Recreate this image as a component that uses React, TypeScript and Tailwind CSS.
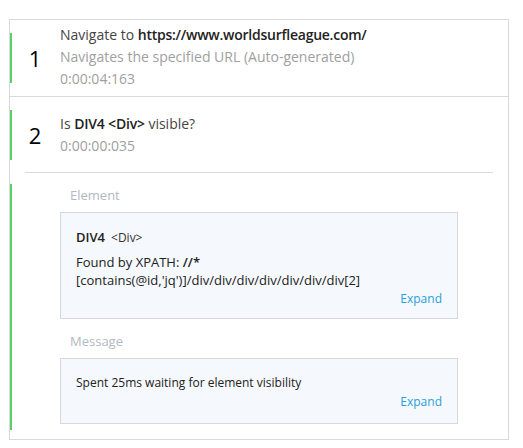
import React from "react";

const font = { fontFamily: '"Open Sans", "Noto Sans", sans-serif' };

export default function App() {
  return (
    <div className="w-[523px] h-[448px] bg-white pt-[19px] pl-[9px]" style={font}>
      <div className="w-[500px] border border-[#d9d9d9]">
        {/* Step 1 */}
        <div className="flex border-b border-[#d9d9d9]">
          <div className="w-[2px] my-[13px] bg-[#56d364]" />
          <div className="w-[48px] flex items-center justify-center text-[22px] text-black leading-none pr-[2px]">1</div>
          <div className="pt-[4px] pb-[6px] text-[14px] leading-[22px]">
            <div className="text-[#444]">
              Navigate to <span className="font-semibold text-[#222] tracking-[-0.25px]">https://www.worldsurfleague.com/</span>
            </div>
            <div className="text-[#a0a0a0]">Navigates the specified URL (Auto-generated)</div>
            <div className="text-[#a0a0a0]">0:00:04:163</div>
          </div>
        </div>
        {/* Step 2 */}
        <div className="flex items-center pt-[13px] pb-[12px]">
          <div className="w-[2px] h-[50px] bg-[#56d364]" />
          <div className="w-[48px] flex items-center justify-center text-[22px] text-black leading-none pr-[2px]">2</div>
          <div className="text-[14px] leading-[22px]">
            <div className="text-[#444]">
              Is <span className="font-semibold text-[#222] tracking-[-0.2px]">DIV4 &lt;Div&gt;</span> visible?
            </div>
            <div className="text-[#a0a0a0]">0:00:00:035</div>
          </div>
        </div>
        <div className="mx-[15px] border-t border-[#d9d9d9]" />
        <div className="flex">
          <div className="w-[2px] mt-[11px] mb-[9px] bg-[#56d364]" />
          <div className="pl-[48px] pt-[12px] pb-[15px] flex flex-col">
            <div className="pl-[10px] text-[13px] leading-[20px] text-[#b3b8bf]">Element</div>
            <div className="mt-[7px] w-[398px] h-[107px] border border-[#d5d8dc] bg-[#f5f8fc] px-[15px] pt-[15px] flex flex-col">
              <div className="flex items-baseline gap-[6px] leading-[18px]">
                <span className="text-[13px] font-semibold text-[#222]">DIV4</span>
                <span className="text-[12px] text-[#333]">&lt;Div&gt;</span>
              </div>
              <div className="mt-[6px] text-[13px] leading-[18px] text-[#222] w-[300px]">
                Found by XPATH: <span className="font-semibold">//*</span>
                <br />
                [contains(@id,'jq')]/div/div/div/div/div/div/div[2]
              </div>
              <div className="self-end text-[12px] leading-[18px] text-[#2a9fd8] mt-[1px]">Expand</div>
            </div>
            <div className="mt-[12px] pl-[10px] text-[13px] leading-[20px] text-[#b3b8bf]">Message</div>
            <div className="mt-[7px] w-[398px] h-[66px] border border-[#d5d8dc] bg-[#f5f8fc] px-[15px] pt-[15px] flex flex-col">
              <div className="text-[12px] leading-[18px] text-[#222]">Spent 25ms waiting for element visibility</div>
              <div className="self-end text-[12px] leading-[18px] text-[#2a9fd8] mt-[1px]">Expand</div>
            </div>
          </div>
        </div>
      </div>
    </div>
  );
}
